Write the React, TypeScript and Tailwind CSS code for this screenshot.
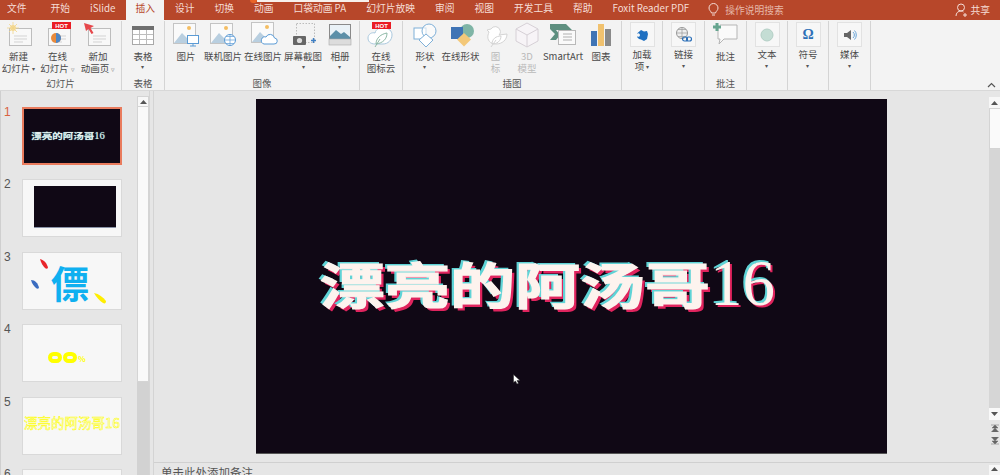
import React from 'react';

const tabs = ['文件', '开始', 'iSlide', '插入', '设计', '切换', '动画', '口袋动画 PA', '幻灯片放映', '审阅', '视图', '开发工具', '帮助', 'Foxit Reader PDF'];

function Svg({ w = 30, h = 26, children }: { w?: number; h?: number; children: React.ReactNode }) {
  return (
    <svg width={w} height={h} viewBox={`0 0 ${w} ${h}`} fill="none">
      {children}
    </svg>
  );
}

const Sheet = () => (
  <>
    <rect x="5.5" y="6.5" width="22" height="17" fill="#f8f8f8" stroke="#bdbdbd" />
    <path d="M10 14h13M10 17h13M10 20h9" stroke="#d3d3d3" />
  </>
);

const Picture = ({ x = 3, y = 2 }: { x?: number; y?: number }) => (
  <g transform={`translate(${x} ${y})`}>
    <rect x=".5" y=".5" width="22" height="20" fill="#fafafa" stroke="#c4c4c4" />
    <path d="M1 20l8-10 6 6 3-3 4 7z" fill="#b9cfe0" />
    <circle cx="16" cy="5" r="2" fill="#f4bd63" />
  </g>
);

function Boxed({ children }: { children: React.ReactNode }) {
  return (
    <div className="w-[25px] h-[25px] bg-[#f7f7f7] border border-[#e2e2e2] flex items-center justify-center">
      {children}
    </div>
  );
}

const Hot = ({ x, y }: { x: number; y: number }) => (
  <g>
    <rect x={x} y={y} width="19" height="7" fill="#ea1c24" />
    <text x={x + 9.5} y={y + 6} textAnchor="middle" fontSize="6" fontWeight="700" fill="#fff" fontFamily="Liberation Sans, sans-serif">HOT</text>
  </g>
);

type Btn = { w: number; icon: React.ReactNode; lines: string[]; arrow?: 'solid' | 'open' | 'below'; muted?: boolean };

function RibbonButton({ b }: { b: Btn }) {
  return (
    <div className="flex flex-col items-center shrink-0" style={{ width: b.w }}>
      <div className="h-[27px] flex items-center justify-center">{b.icon}</div>
      <div className={`mt-[2px] text-[9.5px] leading-[12px] text-center whitespace-nowrap ${b.muted ? 'text-[#b9b9b9]' : 'text-[#4a4a4a]'}`}>
        {b.lines.map((l, i) => (
          <div key={i}>
            {l}
            {i === b.lines.length - 1 && b.arrow === 'solid' && <span className="text-[6px] ml-[2px] align-middle text-[#555]">▾</span>}
            {i === b.lines.length - 1 && b.arrow === 'open' && <span className="text-[7px] ml-[2px] align-middle text-[#888]">▿</span>}
          </div>
        ))}
        {b.arrow === 'below' && <div className="text-[6px] leading-[10px] text-[#555]">▾</div>}
      </div>
    </div>
  );
}

function Group({ w, label, buttons, pl = 0 }: { w: number; label?: string; buttons: Btn[]; pl?: number }) {
  return (
    <div className="shrink-0 flex flex-col h-[69px] border-r border-[#d4d4d4]" style={{ width: w, paddingLeft: pl }}>
      <div className="flex-1 flex items-start">
        {buttons.map((b, i) => (
          <RibbonButton key={i} b={b} />
        ))}
      </div>
      <div className="h-[13px] text-[9.5px] leading-[13px] text-center text-[#555]" style={{ marginLeft: -pl }}>
        {label}
      </div>
    </div>
  );
}

const tableIcon = (
  <Svg w={24} h={22}>
    <rect x="1.5" y="2.5" width="21" height="18" fill="#fff" stroke="#a8a8a8" />
    <rect x="1" y="2" width="22" height="4" fill="#6e6e6e" />
    <path d="M8.5 6v14M15.5 6v14M2 10.5h20M2 15.5h20" stroke="#bdbdbd" />
  </Svg>
);

const groups: { w: number; label?: string; pl?: number; buttons: Btn[] }[] = [
  {
    w: 122,
    label: '幻灯片',
    buttons: [
      {
        w: 37,
        lines: ['新建', '幻灯片'],
        arrow: 'solid',
        icon: (
          <Svg>
            <Sheet />
            <circle cx="9" cy="6" r="3" fill="#f6dc9c" />
            <path d="M9 0v12M3 6h12M5 2l8 8M13 2l-8 8" stroke="#f1d488" strokeWidth=".8" />
          </Svg>
        ),
      },
      {
        w: 41,
        lines: ['在线', '幻灯片'],
        arrow: 'open',
        icon: (
          <Svg>
            <Sheet />
            <circle cx="13" cy="16" r="5" fill="#e88a3c" />
            <path d="M13 11a5 5 0 0 1 0 10z" fill="#4d86c6" />
            <Hot x={9} y={0} />
          </Svg>
        ),
      },
      {
        w: 40,
        lines: ['新加', '动画页'],
        arrow: 'open',
        icon: (
          <Svg>
            <Sheet />
            <path d="M1 1l10 3-3.5 2 3 5-2 1-3-5L3 9z" fill="#e6474b" />
          </Svg>
        ),
      },
    ],
  },
  { w: 43, label: '表格', buttons: [{ w: 42, lines: ['表格'], arrow: 'below', icon: tableIcon }] },
  {
    w: 195,
    label: '图像',
    pl: 3,
    buttons: [
      {
        w: 36,
        lines: ['图片'],
        icon: (
          <Svg>
            <Picture x={2} y={1} />
            <rect x="16.5" y="13.5" width="11" height="8" fill="#fff" stroke="#5b9bd5" />
            <path d="M19 24h6M22 22v2" stroke="#5b9bd5" />
          </Svg>
        ),
      },
      {
        w: 38,
        lines: ['联机图片'],
        icon: (
          <Svg>
            <Picture x={2} y={1} />
            <circle cx="22" cy="18" r="5.5" fill="#fff" stroke="#5b9bd5" />
            <path d="M16.5 18h11M22 12.5v11M18 14.5h8M18 21.5h8" stroke="#5b9bd5" strokeWidth=".7" />
          </Svg>
        ),
      },
      {
        w: 42,
        lines: ['在线图片'],
        icon: (
          <Svg>
            <Picture x={3} y={0} />
            <path d="M16 22h10a3 3 0 0 0 .5-6 4.5 4.5 0 0 0-8.500-1 3.600 3.600 0 0 0-2 7z" fill="#fff" stroke="#5b9bd5" />
          </Svg>
        ),
      },
      {
        w: 38,
        lines: ['屏幕截图'],
        arrow: 'below',
        icon: (
          <Svg>
            <rect x="8.500" y="1.500" width="18" height="19" stroke="#bbb" strokeDasharray="1.500 1.500" />
            <rect x="5" y="14" width="13" height="9" rx="1" fill="#666" />
            <circle cx="11.500" cy="18.500" r="2.600" fill="#ddd" />
            <path d="M23 18.500h5M25.500 16v5" stroke="#3f7fc4" strokeWidth="1.400" />
          </Svg>
        ),
      },
      {
        w: 36,
        lines: ['相册'],
        arrow: 'below',
        icon: (
          <Svg>
            <rect x="4.500" y="2.500" width="21" height="15" fill="#eaf2f7" stroke="#8a8a8a" />
            <path d="M5 14l6-6 5 4 3-2 6 5v2H5z" fill="#5b8fa8" />
            <rect x="4" y="17" width="22" height="6" fill="#dcdcdc" stroke="#aaa" strokeWidth=".6" />
          </Svg>
        ),
      },
    ],
  },
  {
    w: 43,
    buttons: [
      {
        w: 42,
        lines: ['在线', '图标云'],
        icon: (
          <Svg>
            <path d="M9 22c-5 0-7-3-7-6 0-4 4-6 7-5 1-4 5-6 9-5 5 0 8 3 8 7 0 5-4 9-9 9z" fill="#fff" stroke="#a9c8de" />
            <path d="M10 22c0-6 5-10 11-11 0 6-4 10-11 11zM9 25l5-8" stroke="#8db8a6" />
            <Hot x={6} y={0} />
          </Svg>
        ),
      },
    ],
  },
  {
    w: 219,
    label: '插图',
    pl: 5,
    buttons: [
      {
        w: 34,
        lines: ['形状'],
        arrow: 'below',
        icon: (
          <Svg>
            <rect x="4" y="6" width="12" height="11" fill="#fff" stroke="#7fb0d8" />
            <circle cx="19" cy="9" r="7" fill="#fff" fillOpacity=".6" stroke="#7fb0d8" />
            <path d="M16 12l7 6-7 7-7-7z" fill="#fff" stroke="#7fb0d8" />
          </Svg>
        ),
      },
      {
        w: 37,
        lines: ['在线形状'],
        icon: (
          <Svg>
            <circle cx="21" cy="9" r="7" fill="#7fb5a6" />
            <rect x="5" y="5" width="12" height="12" fill="#3f74b5" />
            <path d="M18 11l7 6.500-7 7-7-7z" fill="#f3c879" />
          </Svg>
        ),
      },
      {
        w: 33,
        lines: ['图', '标'],
        muted: true,
        icon: (
          <Svg>
            <path d="M6 8l4-1a5 5 0 0 1 9 1c1 2 0 4-1 5l8-1c0 6-5 10-11 10-6 0-9-4-8-9 0-1 1-2 1-3z" fill="#fff" stroke="#d4d4d4" />
            <path d="M11 22c0-5 4-8 9-8 0 5-4 8-9 8zM10 25l5-7" stroke="#d4d4d4" />
          </Svg>
        ),
      },
      {
        w: 30,
        lines: ['3D', '模型'],
        muted: true,
        icon: (
          <Svg>
            <path d="M15 1l11 6v12l-11 6-11-6V7z" fill="#f7f4f7" stroke="#d6d0d6" />
            <path d="M4 7l11 6 11-6M15 13v12" stroke="#d6d0d6" />
          </Svg>
        ),
      },
      {
        w: 42,
        lines: ['SmartArt'],
        icon: (
          <Svg>
            <path d="M2 2h16l6 6H8l4 5-4 5H2l5-6-5-5z" fill="#5e8f7f" />
            <rect x="10.500" y="8.500" width="17" height="14" fill="#fafafa" stroke="#b8b8b8" />
            <path d="M15 12h9M15 15h9M15 18h9" stroke="#b0b0b0" />
          </Svg>
        ),
      },
      {
        w: 34,
        lines: ['图表'],
        icon: (
          <Svg>
            <rect x="5" y="9" width="6" height="15" fill="#3f74b5" />
            <rect x="12" y="2" width="6" height="22" fill="#f1c26f" />
            <rect x="19" y="7" width="6" height="17" fill="#8a8a8a" />
          </Svg>
        ),
      },
    ],
  },
];

function BoxedGroup({ w, lines, arrow, icon, tail }: { w: number; lines: string[]; arrow: boolean; icon: React.ReactNode; tail?: boolean }) {
  return (
    <div className="shrink-0 flex flex-col items-center h-[69px] border-r border-[#d4d4d4] pt-[1px]" style={{ width: w }}>
      <Boxed>{icon}</Boxed>
      <div className="mt-[1px] text-[9.5px] leading-[12px] text-center text-[#4a4a4a] whitespace-nowrap">
        {lines.map((l, i) => (
          <div key={l}>
            {l}
            {tail && i === lines.length - 1 && <span className="text-[6px] ml-[2px] align-middle text-[#555]">▾</span>}
          </div>
        ))}
        {arrow && <div className="text-[6px] leading-[12px] text-[#555]">▾</div>}
      </div>
    </div>
  );
}

function Ribbon() {
  return (
    <div className="relative h-[70px] bg-[#f3f3f3] flex pt-[1px] shrink-0">
      {groups.map((g, i) => (
        <Group key={i} w={g.w} label={g.label} pl={g.pl} buttons={g.buttons} />
      ))}
      <BoxedGroup
        w={41}
        lines={['加载', '项']}
        arrow={false}
        tail
        icon={
          <Svg w={14} h={14}>
            <path d="M2 5.500L6 2l3 1.500L12 3l1 3-1 5-3 2-3-1.500-2-.5-2-2z" fill="#1f70c1" />
            <path d="M5 7a1.800 1.800 0 1 0 0 .1z" fill="#f7f7f7" />
          </Svg>
        }
      />
      <BoxedGroup
        w={42}
        lines={['链接']}
        arrow
        icon={
          <Svg w={18} h={18}>
            <circle cx="7" cy="7" r="5.500" fill="#eee" stroke="#999" />
            <path d="M1.500 7h11M7 1.500v11M3 3.500h8M3 10.500h8" stroke="#999" strokeWidth=".7" />
            <rect x="7.500" y="11" width="5" height="4" rx="2" stroke="#2d70b8" strokeWidth="1.200" />
            <rect x="11.500" y="11" width="5" height="4" rx="2" stroke="#2d70b8" strokeWidth="1.200" />
          </Svg>
        }
      />
      <div className="w-[42px] shrink-0 flex flex-col items-center h-[69px] border-r border-[#d4d4d4]">
        <Svg w={28} h={28}>
          <path d="M8 4h17v14H12l-5 5 1-5H6V6" fill="#fafafa" stroke="#b5b5b5" />
          <path d="M5 2v8M1 6h8" stroke="#66a58f" strokeWidth="3" />
        </Svg>
        <div className="mt-[1px] text-[9.5px] leading-[12px] text-[#4a4a4a]">批注</div>
        <div className="mt-auto text-[9.5px] leading-[13px] text-[#555]">批注</div>
      </div>
      <BoxedGroup
        w={41}
        lines={['文本']}
        arrow
        icon={
          <Svg w={14} h={14}>
            <circle cx="7" cy="7" r="6" fill="#c4ddd4" stroke="#b3cfc5" />
          </Svg>
        }
      />
      <BoxedGroup
        w={41}
        lines={['符号']}
        arrow
        icon={<span className="text-[14px] leading-none font-bold text-[#2d70b8] font-['Liberation_Serif',serif]">Ω</span>}
      />
      <BoxedGroup
        w={42}
        lines={['媒体']}
        arrow
        icon={
          <Svg w={14} h={14}>
            <path d="M1 5h3l4-3v10L4 9H1z" fill="#666" />
            <path d="M10 4a4 4 0 0 1 0 6M11.500 2.500a6.500 6.500 0 0 1 0 9" stroke="#6aa5d8" />
          </Svg>
        }
      />
      <div className="flex-1 flex items-end justify-end pr-[4px] pb-[2px]">
        <svg width="9" height="6" viewBox="0 0 9 6" fill="none">
          <path d="M1 5l3.500-3.500L8 5" stroke="#555" strokeWidth="1.200" />
        </svg>
      </div>
    </div>
  );
}

function TitleBar() {
  return (
    <div className="relative h-[20px] bg-[#b7472a] flex items-end shrink-0 text-[9.75px] text-[#f5ddd6]">
      <div className="absolute left-[250px] top-0 w-[7px] h-[3px] rounded-b-full bg-[#e8642a]" />
      <div className="absolute left-[257px] top-0 w-[112px] h-[2px] bg-[#f7f0ec]" />
      <div className="flex -ml-[3px]">
        {tabs.map((t, i) =>
          t === '插入' ? (
            <div key={t} className="h-[20px] leading-[17px] px-[9px] mx-[1px] bg-[#f3f3f3] text-[#b7472a] whitespace-nowrap">
              {t}
            </div>
          ) : (
            <div key={t} className={`h-[20px] leading-[16px] px-[10px] whitespace-nowrap ${i === 1 ? 'ml-[4px]' : ''}`}>
              {t}
            </div>
          ),
        )}
      </div>
      <div className="flex items-center h-[20px] ml-[9px]">
        <svg width="11" height="14" viewBox="0 0 11 14" fill="none">
          <path d="M3.500 10C3 8 1 7.500 1 5a4.500 4.500 0 0 1 9 0c0 2.500-2 3-2.500 5zM4 12h3" stroke="#f5ddd6" />
        </svg>
        <span className="ml-[6px] text-[#e6b8a9]">操作说明搜索</span>
      </div>
      <div className="ml-auto flex items-center h-[20px] pr-[10px]">
        <svg width="12" height="14" viewBox="0 0 12 14" fill="none">
          <circle cx="6" cy="4.500" r="3.500" stroke="#f5ddd6" />
          <path d="M1 13c0-3 2-5 5-5 1 0 2 .3 2.500 1M8 12h4M10 10v4" stroke="#f5ddd6" />
        </svg>
        <span className="ml-[4px]">共享</span>
      </div>
    </div>
  );
}

function Thumb({ active, dark, children }: { active?: boolean; dark?: boolean; children?: React.ReactNode }) {
  return (
    <div
      className={`relative w-[100px] h-[58px] overflow-hidden border ${
        active ? 'border-2 border-[#e97b5d] bg-[#100815]' : 'border-[#d9d9d9] bg-[#f7f7f7]'
      } ${dark ? 'flex items-center justify-center' : ''}`}
    >
      {children}
    </div>
  );
}

function SlideList() {
  const items: React.ReactNode[] = [
    <Thumb active dark>
      <span className="flex items-center text-[10.5px] font-bold text-[#e8f0ee] whitespace-nowrap -ml-[8px] [text-shadow:0_0_1px_#5fd3d6]">
        <span className="inline-block scale-y-[.78]">漂亮的阿汤哥</span>
        <span className="font-['Liberation_Serif',serif] font-normal">16</span>
      </span>
    </Thumb>,
    <Thumb>
      <div className="ml-[11px] mt-[6px] w-[82px] h-[42px] bg-[#100815] border-b border-[#8a93a8]" />
    </Thumb>,
    <Thumb>
      <div className="relative w-full h-full flex items-center justify-center">
        <span className="text-[38px] leading-[40px] font-bold text-[#0fb0f0] -ml-[4px] mt-[3px]">僄</span>
        <svg className="absolute inset-0" width="100" height="57" viewBox="0 0 100 57" fill="none">
          <path d="M17 6c4 1 7 4 8 9-1 1-2 1-3 0-2-2-4-5-5-9z" fill="#e8242a" />
          <path d="M8 27c4 0 7 3 8 8-1 1-2 1-3 0-2-2-4-4-5-8z" fill="#3a6cc0" />
          <path d="M71 40c5 1 9 4 12 8 0 2-1 3-3 2-3-2-7-6-9-10z" fill="#ffee00" />
        </svg>
      </div>
    </Thumb>,
    <Thumb>
      <div className="flex items-end h-full pb-[18px] pl-[25px] text-[#ffff00]">
        <span className="w-[14px] h-[11px] rounded-full border-[4px] border-[#ffff00]" />
        <span className="w-[14px] h-[11px] rounded-full border-[4px] border-[#ffff00] ml-[1px]" />
        <span className="text-[8px] leading-[8px] font-bold ml-[1px]">%</span>
      </div>
    </Thumb>,
    <Thumb>
      <div className="flex items-center justify-center h-full pb-[6px]">
        <span className="text-[13.5px] font-normal text-transparent whitespace-nowrap [-webkit-text-stroke:0.5px_#ffff00]">
          漂亮的阿汤哥16
        </span>
      </div>
    </Thumb>,
    <Thumb />,
  ];
  return (
    <div className="w-[137px] shrink-0 border-l border-[#cfcfcf] flex flex-col gap-[14.4px] pt-[16px] overflow-hidden">
      {items.map((node, i) => (
        <div key={i} className="flex shrink-0">
          <div className={`w-[21px] pl-[3px] -mt-[3px] text-[12px] leading-[16px] ${i === 0 ? 'text-[#d9623f]' : 'text-[#555]'} font-['Liberation_Sans',sans-serif]`}>
            {i + 1}
          </div>
          {node}
        </div>
      ))}
    </div>
  );
}

const Tri = ({ down }: { down?: boolean }) => (
  <svg width="7" height="4" viewBox="0 0 7 4">
    <path d={down ? 'M0 0h7L3.500 4z' : 'M0 4h7L3.500 0z'} fill="#555" />
  </svg>
);

function LeftScroll() {
  return (
    <div className="w-[13px] shrink-0 flex flex-col pt-[5px] border-r border-[#d4d4d4] mr-[3px]">
      <div className="h-[11px] bg-[#f7f7f7] border border-[#d4d4d4] flex items-center justify-center shrink-0">
        <Tri />
      </div>
      <div className="h-[275px] bg-[#f9f9f9] border-x border-b border-[#d4d4d4] shrink-0" />
      <div className="flex-1 bg-[#d2d2d2]" />
    </div>
  );
}

function RightScroll() {
  return (
    <div className="w-[11px] shrink-0 flex flex-col pt-[6px]">
      <div className="h-[11px] bg-[#f7f7f7] flex items-center justify-center shrink-0">
        <Tri />
      </div>
      <div className="h-[41px] bg-[#fafafa] border-y border-l border-[#d4d4d4] shrink-0" />
      <div className="h-[259px] bg-[#d6d6d6] shrink-0" />
      <div className="h-[12px] bg-[#f9f9f9] flex items-center justify-center shrink-0">
        <Tri down />
      </div>
      <div className="mt-[4px] flex flex-col items-center text-[#555]">
        <svg width="8" height="8" viewBox="0 0 8 8">
          <path d="M0 1h8M1 4l3-3 3 3zM.5 8L4 4l3.500 4z" fill="#666" stroke="#666" strokeWidth=".5" />
        </svg>
        <svg className="mt-[5px]" width="8" height="8" viewBox="0 0 8 8">
          <path d="M0 7h8M1 4l3 3 3-3zM.5 0L4 4l3.500-4z" fill="#666" stroke="#666" strokeWidth=".5" />
        </svg>
      </div>
    </div>
  );
}

export default function App() {
  return (
    <div className="relative w-[1000px] h-[475px] overflow-hidden bg-[#e6e6e6] flex flex-col font-['Noto_Sans_CJK_SC','Noto_Sans',sans-serif]">
      <TitleBar />
      <Ribbon />
      <div className="flex-1 min-h-0 flex border-t border-[#d8d8d8]">
        <SlideList />
        <LeftScroll />
        <div className="flex-1 min-w-0 flex flex-col border-l border-[#d4d4d4]">
          <div className="flex-1 min-h-0 flex">
            <div className="flex-1 min-w-0 flex justify-center pt-[8px]">
              <div className="relative w-[631px] h-[355px] bg-[#100815] flex items-start pt-[149px] pl-[64px] border-b border-[#555]">
                <span className="inline-block scale-y-[.75] text-[65px] leading-[70px] font-bold text-[#fdf3ee] whitespace-nowrap [-webkit-text-stroke:1.5px_#fdf3ee] [text-shadow:-3px_-3px_0_#5fd3d6,3px_4px_0_#e0245e]">
                  漂亮的阿汤哥
                </span>
                <span className="inline-block text-[65px] leading-[70px] font-['Liberation_Serif',serif] text-[#fdf3ee] whitespace-nowrap [text-shadow:-2px_-2px_0_#5fd3d6,2px_2px_0_#e0245e]">
                  16
                </span>
                <svg className="absolute left-[257px] top-[275px]" width="8" height="11" viewBox="0 0 8 11">
                  <path d="M.5.500v8l2-1.500 1.500 3 1.500-.7L4 6.500h3z" fill="#fff" stroke="#222" strokeWidth=".5" />
                </svg>
              </div>
            </div>
            <RightScroll />
          </div>
          <div className="h-[13px] shrink-0 border-t border-[#d0d0d0] flex justify-between overflow-hidden">
            <span className="pl-[7px] text-[11.5px] leading-[18px] text-[#555]">单击此处添加备注</span>
            <div className="w-[11px] mt-[2px] bg-[#f7f7f7] flex justify-center pt-[2px]">
              <Tri />
            </div>
          </div>
        </div>
      </div>
    </div>
  );
}
